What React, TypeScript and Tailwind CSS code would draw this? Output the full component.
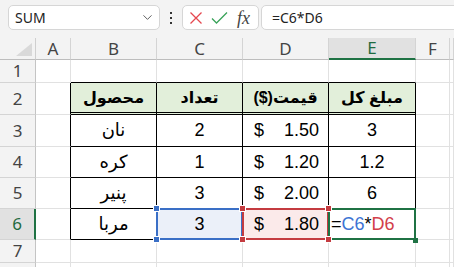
import * as React from 'react'
import { ChevronDown } from 'lucide-react'

type Cell = { text: string; kind: 'fa' | 'num' | 'money' | 'formula'; bold?: boolean }

const COLS = ['A', 'B', 'C', 'D', 'E', 'F', '']
const ROWS = [1, 2, 3, 4, 5, 6, 7, 8]

const data: Record<string, Cell> = {
    B2: { text: 'محصول', kind: 'fa', bold: true },
    C2: { text: 'تعداد', kind: 'fa', bold: true },
    D2: { text: 'قیمت($)', kind: 'fa', bold: true },
    E2: { text: 'مبلغ کل', kind: 'fa', bold: true },
    B3: { text: 'نان', kind: 'fa' },
    C3: { text: '2', kind: 'num' },
    D3: { text: '1.50', kind: 'money' },
    E3: { text: '3', kind: 'num' },
    B4: { text: 'کره', kind: 'fa' },
    C4: { text: '1', kind: 'num' },
    D4: { text: '1.20', kind: 'money' },
    E4: { text: '1.2', kind: 'num' },
    B5: { text: 'پنیر', kind: 'fa' },
    C5: { text: '3', kind: 'num' },
    D5: { text: '2.00', kind: 'money' },
    E5: { text: '6', kind: 'num' },
    B6: { text: 'مربا', kind: 'fa' },
    C6: { text: '3', kind: 'num' },
    D6: { text: '1.80', kind: 'money' },
    E6: { text: '=C6*D6', kind: 'formula' },
}

function Handle({ pos, color }: { pos: string; color: string }) {
    return <span className={`absolute z-10 w-[7px] h-[7px] border border-white ${pos} ${color}`} />
}

function cellBorders(c: number, r: number) {
    // c: 1 = A ... 7 = G
    const inTable = r >= 2 && r <= 6 && c >= 2 && c <= 5
    const right = inTable || (c === 1 && r >= 2 && r <= 6) ? 'border-r-black' : 'border-r-[#e1e1e1]'
    const bottom = inTable || (r === 1 && c >= 2 && c <= 5) ? 'border-b-black' : 'border-b-[#e1e1e1]'
    const dbl = r === 2 && c >= 2 && c <= 5 ? 'border-b-[3px] border-double' : 'border-b'
    return `border-r ${dbl} ${right} ${bottom}`
}

function CellContent({ cell }: { cell: Cell }) {
    if (cell.kind === 'fa') {
        return (
            <div dir="rtl" className={`w-full text-center ${cell.bold ? 'font-bold text-[16px]' : ''}`}>
                {cell.text}
            </div>
        )
    }
    if (cell.kind === 'money') {
        return (
            <div className="w-full flex justify-between pl-[11px] pr-[9px]">
                <span>$</span>
                <span>{cell.text}</span>
            </div>
        )
    }
    if (cell.kind === 'formula') {
        return (
            <div className="w-full pl-[2px] pt-[1px]">
                =<span className="text-[#3d74d4]">C6</span>*<span className="text-[#d2404a]">D6</span>
            </div>
        )
    }
    return <div className="w-full text-center">{cell.text}</div>
}

function Toolbar() {
    return (
        <div className="h-[38px] flex items-start pt-[5px] pl-[8px] bg-[#f3f3f3]">
            <div className="w-[152px] h-[25px] bg-white border border-[#d6d6d6] rounded-[5px] flex items-center pl-[6px] pr-[4px] justify-between">
                <span className="text-[14px] text-[#222]">SUM</span>
                <ChevronDown size={15} strokeWidth={1.5} className="text-[#555]" />
            </div>
            <div className="w-[22px] h-[25px] flex flex-col items-center justify-center gap-[3px]">
                <span className="w-[2px] h-[2px] bg-[#333]" />
                <span className="w-[2px] h-[2px] bg-[#333]" />
                <span className="w-[2px] h-[2px] bg-[#333]" />
            </div>
            <div className="w-[77px] h-[25px] bg-white border border-[#d6d6d6] rounded-[5px] flex items-center pl-[5px]">
                <svg width="14" height="14" viewBox="0 0 14 14" className="ml-[1px]">
                    <path d="M1.5 1.5 L12.5 12.5 M12.5 1.5 L1.5 12.5" stroke="#e5474f" strokeWidth="1.3" fill="none" />
                </svg>
                <svg width="17" height="14" viewBox="0 0 17 14" className="ml-[8px]">
                    <path d="M1 7.5 L5.5 12 L16 1.5" stroke="#3aa35a" strokeWidth="1.3" fill="none" />
                </svg>
                <span className="ml-[9px] text-[18px] italic text-[#444] leading-none font-['Liberation_Serif',serif]">fx</span>
            </div>
            <div className="flex-1 h-[25px] ml-[2px] -mr-[8px] bg-white border border-[#d6d6d6] rounded-[5px] flex items-center pl-[10px]">
                <span className="text-[14px] text-[#222]">=C6*D6</span>
            </div>
        </div>
    )
}

export default function App() {
    return (
        <div className="w-[454px] h-[267px] overflow-hidden bg-[#f3f3f3] font-['Noto_Sans',sans-serif]">
            <Toolbar />
            <div className="grid grid-cols-[36px_35px_86px_86px_86px_87px_34px_1fr] grid-rows-[22px_23px_32px_32px_31px_31px_31px_23px_23px] bg-white">
                {/* corner */}
                <div className="relative bg-[#f3f3f3] border-r border-b border-r-[#cfcfcf] border-b-[#bdbdbd]">
                    <svg width="16" height="13" viewBox="0 0 16 13" className="absolute right-[3px] bottom-[3px]">
                        <path d="M16 0 L16 13 L0 13 Z" fill="#d9d9d9" />
                    </svg>
                </div>
                {COLS.map((c) =>
                    c === 'E' ? (
                        <div key={c} className="flex items-center justify-center bg-[#e1e1e1] border-r border-r-[#d4d4d4] border-b-2 border-b-[#1f7244] text-[17px] text-[#1f6b40]">
                            {c}
                        </div>
                    ) : (
                        <div key={c} className="flex items-center justify-center bg-[#f3f3f3] border-r border-b border-r-[#d4d4d4] border-b-[#bdbdbd] text-[17px] text-[#444]">
                            {c}
                        </div>
                    )
                )}
                {ROWS.map((r) => (
                    <React.Fragment key={r}>
                        {r === 6 ? (
                            <div className="flex items-center justify-center bg-[#e1e1e1] border-r-2 border-b border-r-[#1f7244] border-b-[#d4d4d4] text-[17px] text-[#1f6b40]">
                                {r}
                            </div>
                        ) : (
                            <div className="flex items-center justify-center bg-[#f3f3f3] border-r border-b border-r-[#c4c4c4] border-b-[#d4d4d4] text-[17px] text-[#444]">
                                {r < 8 ? r : null}
                            </div>
                        )}
                        {COLS.map((c, i) => {
                            const key = `${c}${r}`
                            const cell = data[key]
                            const bg =
                                r === 2 && i >= 1 && i <= 4
                                    ? 'bg-[#e2efda]'
                                    : key === 'C6'
                                        ? 'bg-[#ebf0f9]'
                                        : key === 'D6'
                                            ? 'bg-[#fbeaea]'
                                            : 'bg-white'
                            return (
                                <div
                                    key={key}
                                    className={`relative flex items-center text-[18px] text-black font-['Liberation_Sans','DejaVu_Sans',sans-serif] ${bg} ${cellBorders(i + 1, r)}`}
                                >
                                    {cell && <CellContent cell={cell} />}
                                    {key === 'C6' && (
                                        <>
                                            <span className="absolute -left-px -top-px -right-px -bottom-px border-2 border-[#3a6fc6]" />
                                            <Handle pos="-left-[4px] -top-[4px]" color="bg-[#3a6fc6]" />
                                            <Handle pos="-left-[4px] -bottom-[4px]" color="bg-[#3a6fc6]" />
                                        </>
                                    )}
                                    {key === 'D6' && (
                                        <>
                                            <span className="absolute -left-px -top-px -right-px -bottom-px border-2 border-[#c43b40]" />
                                            <Handle pos="-left-[4px] -top-[4px]" color="bg-[#c43b40]" />
                                            <Handle pos="-left-[4px] -bottom-[4px]" color="bg-[#c43b40]" />
                                            <Handle pos="-right-[4px] -top-[4px]" color="bg-[#c43b40]" />
                                            <Handle pos="-right-[4px] -bottom-[4px]" color="bg-[#c43b40]" />
                                        </>
                                    )}
                                    {key === 'E6' && (
                                        <>
                                            <span className="absolute -left-px -top-px -right-px -bottom-px border-2 border-[#1f7244]" />
                                            <span className="absolute z-10 -right-[3px] -bottom-[4px] w-[5px] h-[5px] bg-[#1f7244]" />
                                        </>
                                    )}
                                </div>
                            )
                        })}
                    </React.Fragment>
                ))}
            </div>
        </div>
    )
}
